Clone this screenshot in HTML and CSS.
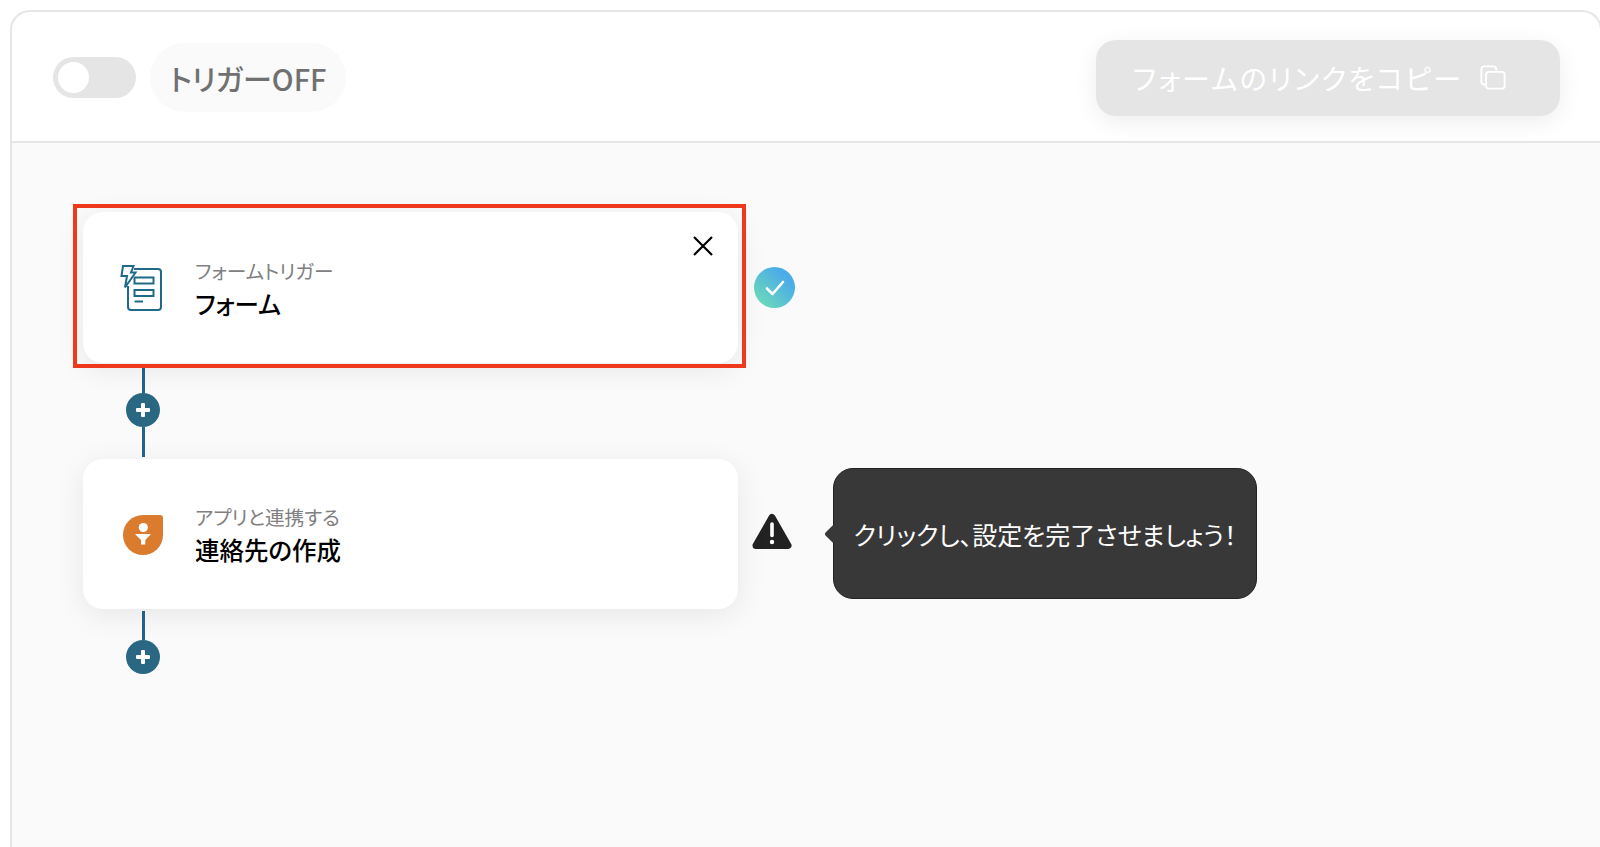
FILE: index.html
```html
<!DOCTYPE html>
<html lang="ja">
<head>
<meta charset="utf-8">
<title>フォームトリガー</title>
<link rel="stylesheet" href="styles.css">
</head>
<body>
<main class="frame">
  <header class="topbar">
    <div class="trigger">
      <span class="toggle"><span class="knob"></span></span>
      <span class="pill">トリガーOFF</span>
    </div>
    <button class="copy" type="button">
      <span class="copy-label">フォームのリンクをコピー</span>
      <svg class="copy-icon" viewBox="0 0 28 26" fill="none" stroke="#fff" stroke-width="2">
        <path d="M6 20.500H4.500A3 3 0 0 1 1.500 17.500V4A3 3 0 0 1 4.500 1H14.500A3 3 0 0 1 17.500 4V5.500"/>
        <rect x="6.500" y="7" width="20" height="18" rx="3"/>
      </svg>
    </button>
  </header>
  <section class="canvas">
    <div class="step">
      <article class="card">
        <svg class="app-icon" viewBox="0 0 44 50" fill="none" stroke="#1F6A8A" stroke-width="2">
          <path d="M14 6H38A3 3 0 0 1 41 9V44A3 3 0 0 1 38 47H11A3 3 0 0 1 8 44V23"/>
          <path d="M3 3H13.500L11 9.500H15.500L5 24.500L7 13H1.500Z" fill="#fff"/>
          <rect x="14.500" y="14.500" width="19" height="6"/>
          <rect x="14.500" y="27" width="19" height="6"/>
          <path d="M14.500 38.500H23"/>
        </svg>
        <div class="labels">
          <p class="kicker">フォームトリガー</p>
          <p class="name">フォーム</p>
        </div>
        <svg class="close" viewBox="0 0 20 20" fill="none" stroke="#000" stroke-width="2.200">
          <path d="M1 1L19 19M19 1L1 19"/>
        </svg>
      </article>
      <span class="done">
        <svg viewBox="0 0 20 16" fill="none" stroke="#fff" stroke-width="2.600" stroke-linecap="round" stroke-linejoin="round">
          <path d="M2 8.500L7.500 14L18 2"/>
        </svg>
      </span>
      <div class="highlight"></div>
    </div>
    <div class="link">
      <span class="wire wire-first"></span>
      <span class="plus"></span>
      <span class="wire wire-fill"></span>
    </div>
    <div class="step">
      <article class="card card-short">
        <svg class="app-icon app-icon-shift" viewBox="0 0 44 50">
          <path d="M22 8H39A3 3 0 0 1 42 11V28A20 20 0 1 1 22 8Z" fill="#DB7B2E"/>
          <circle cx="22.300" cy="20.500" r="4.600" fill="#fff"/>
          <path d="M14 27H30L24.300 33V37.500H20V33Z" fill="#fff"/>
        </svg>
        <div class="labels">
          <p class="kicker">アプリと連携する</p>
          <p class="name">連絡先の作成</p>
        </div>
      </article>
      <svg class="warn" viewBox="0 0 40 37">
        <path d="M20 4.500L36 32.500H4Z" fill="#222" stroke="#222" stroke-width="7" stroke-linejoin="round"/>
        <path d="M20 11V22.500" stroke="#fff" stroke-width="3.600" stroke-linecap="round"/>
        <circle cx="20" cy="29" r="2.200" fill="#fff"/>
      </svg>
      <div class="tooltip">クリックし、設定を完了させましょう！</div>
    </div>
    <div class="link">
      <span class="wire wire-next"></span>
      <span class="plus"></span>
    </div>
  </section>
</main>
</body>
</html>
```

FILE: styles.css
```css
* { box-sizing: border-box; }
html, body { margin: 0; height: 100%; overflow: hidden; background: #fff; }
body {
  padding: 10px 0 0 10px;
  font-family: "Noto Sans CJK JP", "Noto Sans", sans-serif;
  font-feature-settings: "palt";
}
p { margin: 0; }

.frame {
  width: 1592px;
  height: 837px;
  border: 2px solid #e6e6e6;
  border-bottom: 0;
  border-radius: 20px 20px 0 0;
  overflow: hidden;
  background: #fff;
}

.topbar {
  height: 131px;
  display: flex;
  align-items: center;
  justify-content: space-between;
  padding: 2px 40px 0 41px;
  border-bottom: 2px solid #e6e6e6;
}
.trigger { display: flex; align-items: center; gap: 14px; }
.toggle {
  width: 83px;
  height: 41px;
  padding: 5px;
  border-radius: 21px;
  background: #e5e5e5;
  display: block;
}
.knob { display: block; width: 31px; height: 31px; border-radius: 50%; background: #fff; }
.pill {
  height: 69px;
  width: 196px;
  border-radius: 35px;
  background: #fafafa;
  color: #707070;
  font-size: 29px;
  font-weight: 500;
  display: flex;
  align-items: center;
  justify-content: center;
}
.copy {
  width: 464px;
  height: 76px;
  border: 0;
  padding: 0 17px 0 0;
  border-radius: 20px;
  background: #e5e5e5;
  color: #fff;
  font: inherit;
  font-size: 28px;
  display: flex;
  align-items: center;
  justify-content: center;
  gap: 17px;
  box-shadow: 0 6px 24px rgba(0, 0, 0, .07);
}
.copy-label { letter-spacing: 2.200px; }
.copy-icon { width: 26px; height: 25px; }

.canvas {
  height: 704px;
  background: #fafafa;
  padding: 69px 0 0 71px;
}
.step { position: relative; display: flex; align-items: center; }
.card {
  position: relative;
  width: 655px;
  height: 151px;
  background: #fff;
  border-radius: 20px;
  box-shadow: 0 6px 30px rgba(0, 0, 0, .08);
  display: flex;
  align-items: center;
  padding-left: 37px;
  gap: 31px;
}
.card-short { height: 150px; }
.app-icon { width: 44px; height: 50px; flex: none; }
.app-icon-shift { transform: translate(1px, -2px); }
.labels { display: flex; flex-direction: column; gap: 1px; padding-top: 2px; }
.kicker { font-size: 19.700px; line-height: 29px; color: #808080; }
.name { font-size: 24.500px; line-height: 36px; font-weight: 500; color: #000; }
.close { position: absolute; top: 24px; right: 25px; width: 20px; height: 20px; }

.done {
  margin-left: 16px;
  width: 41px;
  height: 41px;
  border-radius: 50%;
  background: linear-gradient(45deg, #6ddbb8 10%, #4cace8 75%);
  display: flex;
  align-items: center;
  justify-content: center;
}
.done svg { width: 20px; height: 16px; }
.highlight {
  position: absolute;
  top: -8px;
  left: -10px;
  width: 673px;
  height: 164px;
  border: 4px solid #ee3a1c;
  pointer-events: none;
}

.link {
  width: 34px;
  margin-left: 43px;
  display: flex;
  flex-direction: column;
  align-items: center;
}
.wire { width: 3px; background: #22658a; display: block; }
.wire-first { height: 25px; margin-top: 5px; }
.wire-next { height: 29px; margin-top: 2px; }
.wire-fill { height: 30px; margin-bottom: 2px; }
.plus {
  position: relative;
  width: 34px;
  height: 34px;
  border-radius: 50%;
  background: #2a6782;
  display: block;
  flex: none;
}
.plus::before, .plus::after {
  content: "";
  position: absolute;
  left: 50%;
  top: 50%;
  background: #fff;
  border-radius: 1px;
  transform: translate(-50%, -50%);
}
.plus::before { width: 14px; height: 4px; }
.plus::after { width: 4px; height: 14px; }

.warn { margin: 0 0 6px 14px; width: 40px; height: 37px; flex: none; }
.tooltip {
  position: absolute;
  left: 750px;
  top: 9px;
  width: 424px;
  height: 131px;
  border-radius: 20px;
  background: #383838;
  border: 1px solid #222;
  color: #fff;
  font-size: 25px;
  display: flex;
  align-items: center;
  justify-content: center;
}
.tooltip::before {
  content: "";
  position: absolute;
  left: -7px;
  top: 58px;
  width: 14px;
  height: 14px;
  background: #383838;
  border-radius: 2px;
  transform: rotate(45deg);
}
```
